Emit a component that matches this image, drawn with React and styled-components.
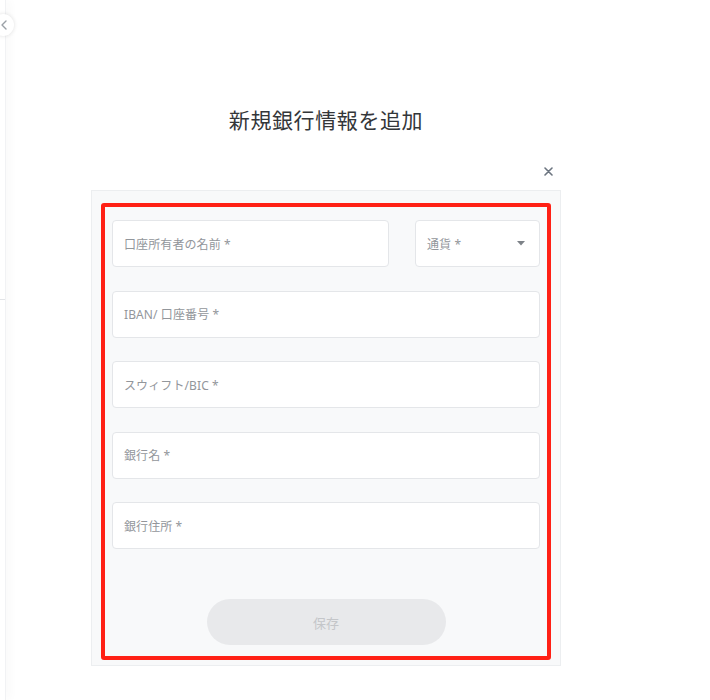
import styled, { createGlobalStyle } from 'styled-components'

const GlobalStyle = createGlobalStyle`
  html, body {
    margin: 0;
    padding: 0;
    background: #ffffff;
    font-family: "Noto Sans", "Noto Sans CJK JP", sans-serif;
  }
`;

function Chevron() {
  return (
    <svg width="8" height="10" viewBox="0 0 8 10">
      <path d="M6 1 L2 5 L6 9" fill="none" stroke="#9aa0a6" strokeWidth="1.4" strokeLinecap="round" strokeLinejoin="round" />
    </svg>
  );
}

function Caret() {
  return (
    <svg width="8" height="5" viewBox="0 0 8 5">
      <path d="M0 0 L8 0 L4 4.5 Z" fill="#7d8288" />
    </svg>
  );
}

function CloseIcon() {
  return (
    <svg width="9" height="9" viewBox="0 0 9 9">
      <path d="M1 1 L8 8 M8 1 L1 8" stroke="#6c7580" strokeWidth="1.6" strokeLinecap="round" />
    </svg>
  );
}

const fields = ["IBAN/ 口座番号 *", "スウィフト/BIC *", "銀行名 *", "銀行住所 *"];

function App() {
  return (
    <>
      <GlobalStyle />
      <Page>
        <Sidebar>
          <CollapseButton><Chevron /></CollapseButton>
          <SideTick />
        </Sidebar>
        <Main>
          <Title>新規銀行情報を追加</Title>
          <CloseRow>
            <CloseButton><CloseIcon /></CloseButton>
          </CloseRow>
          <Card>
            <Form>
              <Row>
                <Field $grow>
                  <Placeholder>口座所有者の名前 *</Placeholder>
                </Field>
                <Field $width="125px">
                  <Placeholder>通貨 *</Placeholder>
                  <Caret />
                </Field>
              </Row>
              {fields.map((f) => (
                <Field key={f}>
                  <Placeholder>{f}</Placeholder>
                </Field>
              ))}
              <SaveButton disabled>保存</SaveButton>
            </Form>
          </Card>
        </Main>
      </Page>
    </>
  );
}

export default App;

const Page = styled.div`
  display: flex;
  min-height: 700px;
`;

const Sidebar = styled.aside`
  position: relative;
  width: 5px;
  border-right: 1px solid #f1f2f4;
  box-shadow: 4px 0 8px rgba(0, 0, 0, 0.03);
`;

const CollapseButton = styled.div`
  position: absolute;
  left: -8px;
  top: 14px;
  width: 22px;
  height: 22px;
  border-radius: 50%;
  background: #ffffff;
  box-shadow: 0 0 4px rgba(0, 0, 0, 0.12);
  display: flex;
  align-items: center;
  justify-content: flex-end;
  padding-right: 6px;
  box-sizing: border-box;
`;

const SideTick = styled.div`
  position: absolute;
  left: 0;
  top: 299px;
  width: 5px;
  height: 1px;
  background: #e2e4e7;
`;

const Main = styled.main`
  width: 470px;
  margin-left: 85px;
  padding-top: 106px;
  display: flex;
  flex-direction: column;
`;

const Title = styled.h1`
  margin: 0;
  text-align: center;
  font-size: 21px;
  font-weight: 400;
  letter-spacing: 0.6px;
  color: #333639;
  line-height: 28px;
`;

const CloseRow = styled.div`
  display: flex;
  justify-content: flex-end;
  padding: 32px 8px 0 0;
  height: 24px;
`;

const CloseButton = styled.div`
  width: 10px;
  height: 10px;
  display: flex;
  align-items: center;
  justify-content: center;
`;

const Card = styled.section`
  background: #f8f9fa;
  border: 1px solid #eceef0;
  padding: 12px 9px 5px 9px;
`;

const Form = styled.div`
  border: 4px solid #ff2015;
  border-radius: 3px;
  padding: 13px 7px 11px 7px;
  display: flex;
  flex-direction: column;
  gap: 23.5px;
`;

const Row = styled.div`
  display: flex;
  gap: 26px;
`;

const Field = styled.div`
  box-sizing: border-box;
  height: 47px;
  flex: ${(p) => (p.$grow ? '1' : `0 0 ${p.$width || 'auto'}`)};
  background: #ffffff;
  border: 1px solid #e4e6e9;
  border-radius: 4px;
  display: flex;
  align-items: center;
  justify-content: space-between;
  padding: 0 14px 0 11px;
`;

const Placeholder = styled.span`
  font-size: 12px;
  color: #92969b;
  letter-spacing: 0.1px;
`;

const SaveButton = styled.button`
  align-self: center;
  margin-top: 26.5px;
  width: 239px;
  height: 46px;
  border: none;
  border-radius: 23px;
  background: #e8e9eb;
  color: #c4c6c9;
  font-family: "Noto Sans", "Noto Sans CJK JP", sans-serif;
  font-size: 13px;
`;
